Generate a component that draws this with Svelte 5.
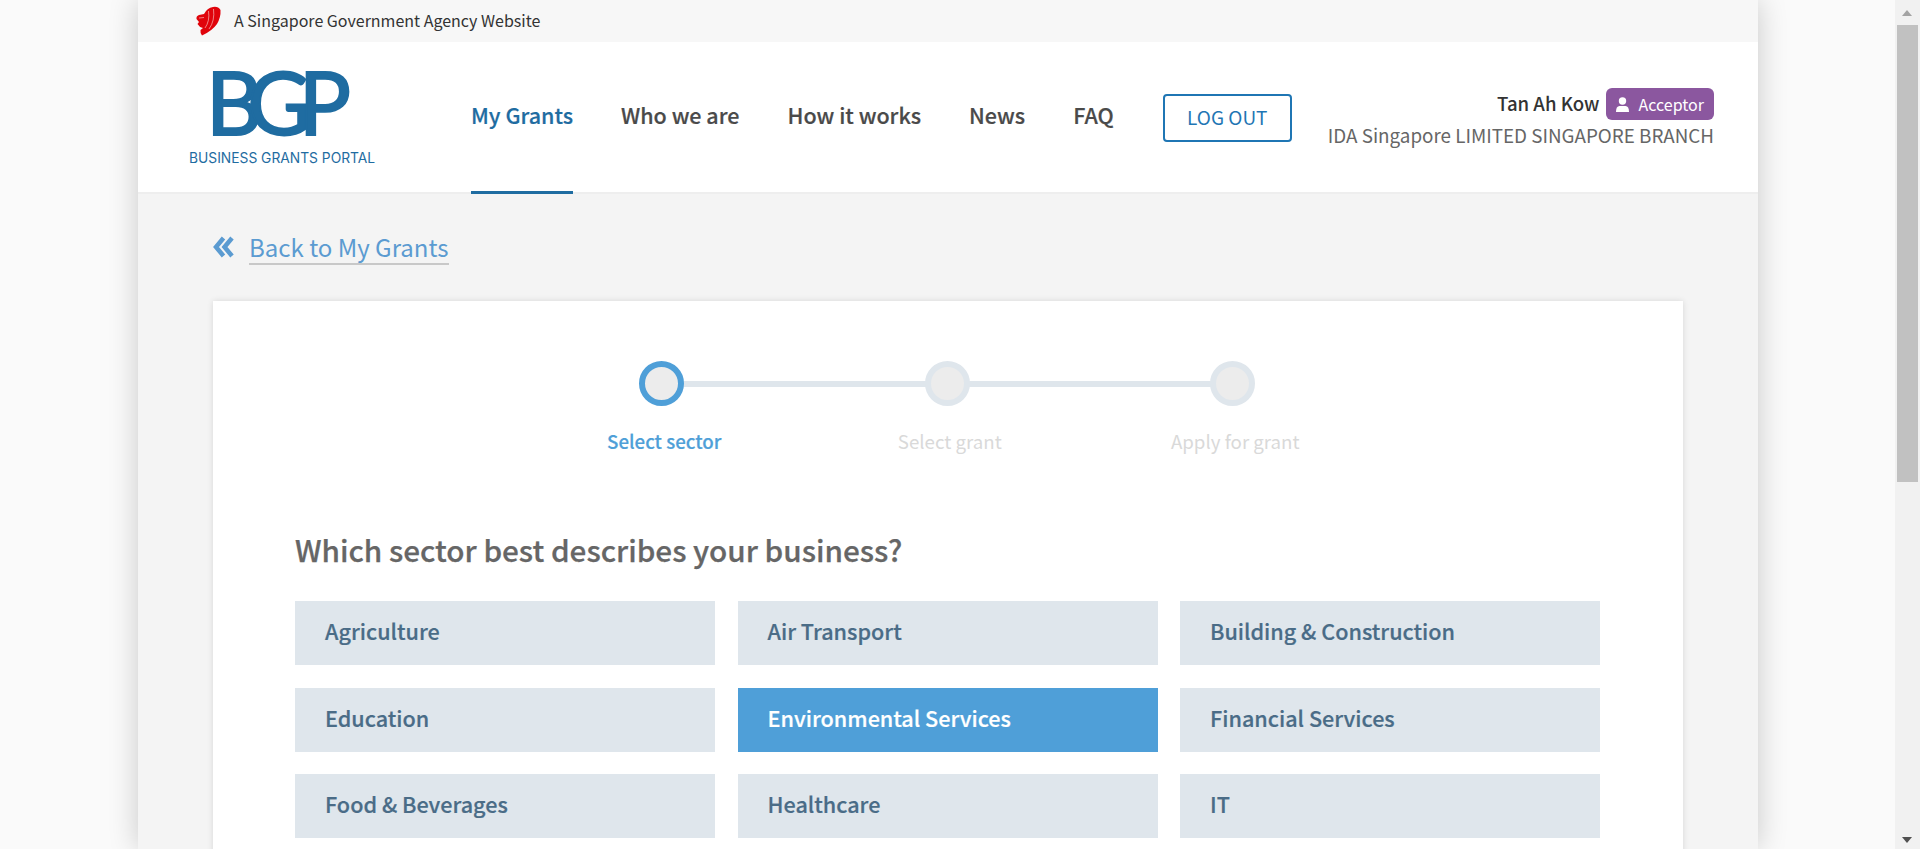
<script>
  const steps = [
    { label: 'Select sector', active: true },
    { label: 'Select grant', active: false },
    { label: 'Apply for grant', active: false }
  ];
  const sectors = [
    'Agriculture', 'Air Transport', 'Building & Construction',
    'Education', 'Environmental Services', 'Financial Services',
    'Food & Beverages', 'Healthcare', 'IT'
  ];
  const selected = 'Environmental Services';
  const nav = ['My Grants', 'Who we are', 'How it works', 'News', 'FAQ'];
</script>

<div class="page">
  <div class="shell">
    <div class="gov">
      <svg class="lion" width="25" height="30" viewBox="0 0 25 30" aria-hidden="true">
        <path fill="#e0040b" d="M3 9 L8 8 Q11 2 17 1 Q22 0 24.500 4 Q25 11 21 18 Q16 25 6 29.500 Q4 27 4.500 24 L7 22 Q3 21 1.500 18 L3 16 L0.500 13 Q0 10 3 9 Z"/>
        <path fill="none" stroke="#f7b8b8" stroke-width="0.700" d="M9 22 Q14 15 12.500 5 M13 23 Q19 15 17.500 3 M3 12 L8 11.500"/>
      </svg>
      <span class="govtext">A Singapore Government Agency Website</span>
    </div>
    <header class="head">
      <div class="logo">
        <div class="mark"><span>B</span><span>G</span><span>P</span></div>
        <div class="sub">BUSINESS GRANTS PORTAL</div>
      </div>
      <nav class="nav">
        {#each nav as item, i}
          <span class="link" class:on={i === 0}>{item}</span>
        {/each}
      </nav>
      <button class="logout">LOG OUT</button>
      <div class="user">
        <div class="line">
          <span class="name">Tan Ah Kow</span>
          <span class="role">
            <svg width="13" height="15" viewBox="0 0 13 15" aria-hidden="true"><circle cx="6.500" cy="4" r="3.700" fill="#fff"/><path fill="#fff" d="M0 15 Q0 9 3.500 9 H9.500 Q13 9 13 15 Z"/></svg>
            <span>Acceptor</span>
          </span>
        </div>
        <div class="org">IDA Singapore LIMITED SINGAPORE BRANCH</div>
      </div>
    </header>
    <main class="content">
      <div class="back">
        <svg width="21" height="22" viewBox="0 0 21 22" aria-hidden="true"><path fill="none" stroke="#5b9bd1" stroke-width="4.500" d="M10.500 2 L3 11 L10.500 20 M19 2 L11.500 11 L19 20"/></svg>
        <span class="backlink">Back to My Grants</span>
      </div>
      <section class="card">
        <div class="stepper">
          {#each steps as s}
            <div class="step" class:active={s.active}>
              <div class="dot"></div>
              <div class="label">{s.label}</div>
            </div>
          {/each}
        </div>
        <h1>Which sector best describes your business?</h1>
        <div class="grid">
          {#each sectors as s}
            <div class="tile" class:sel={s === selected}>{s}</div>
          {/each}
        </div>
      </section>
    </main>
  </div>
  <div class="scroll">
    <div class="up"></div>
    <div class="thumb"></div>
    <div class="down"></div>
  </div>
</div>

<style>
  :global(html), :global(body) { margin: 0; height: 849px; overflow: hidden; background: #fafafa; }
  .page {
    height: 849px; overflow: hidden; position: relative; background: #fafafa;
    font-family: "Noto Sans CJK SC", "Source Sans Pro", sans-serif;
  }
  .shell {
    width: 1620px; margin-left: 138px; height: 849px; background: #f4f4f4;
    box-shadow: 0 0 28px rgba(0,0,0,.2); overflow: hidden;
  }
  .gov {
    height: 42px; background: #f7f7f7; display: flex; align-items: center;
    padding-left: 58px; gap: 13px; font-size: 16px; color: #333; line-height: 40px;
  }
  .govtext { padding-bottom: 2px; }
  .lion { flex: none; }
  .head {
    height: 150px; background: #fff; border-bottom: 2px solid #eee;
    display: flex; position: relative;
  }
  .logo { width: 333px; padding-left: 51px; box-sizing: border-box; color: #1f6ca1; }
  .mark {
    font-family: "Lato", sans-serif; font-weight: 400; font-size: 87px; line-height: 66px;
    -webkit-text-stroke: 2px #1f6ca1;
    height: 66px; margin-top: 27px; margin-left: 17px; display: flex;
  }
  .mark span:nth-child(2) { margin-left: -15px; }
  .mark span:nth-child(3) { margin-left: -12px; }
  .sub {
    font-family: "Inter", sans-serif; font-weight: 400; font-size: 13.8px; line-height: 16px; margin-top: 15px; white-space: nowrap;
  }
  .nav { display: flex; gap: 48px; height: 152px; }
  .link {
    font-size: 21.5px; font-weight: 500; color: #4a4a4a; line-height: 29px; padding-top: 58px;
    -webkit-text-stroke: 0.2px currentColor;
    box-sizing: border-box; height: 152px; border-bottom: 3px solid transparent; white-space: nowrap;
  }
  .link.on { color: #1f6ca1; border-bottom-color: #1f6ca1; }
  .logout {
    margin: 52px 0 0 49px; width: 129px; height: 48px; box-sizing: border-box;
    border: 2px solid #1f76b4; border-radius: 4px; background: #fff; color: #1f76b4;
    font: 400 19px/1 "Noto Sans CJK SC", sans-serif; padding: 0 0 4px;
  }
  .user { position: absolute; right: 44px; top: 46px; text-align: right; }
  .line { display: flex; justify-content: flex-end; align-items: center; gap: 6px; height: 32px; }
  .name { font-size: 18.6px; font-weight: 500; color: #333; line-height: 28px; padding-bottom: 2px; }
  .role {
    background: #8b579f; color: #fff; border-radius: 6px; height: 32px; display: inline-flex; align-items: center;
    gap: 10px; padding: 0 10px 0 10px; font-size: 16px;
  }
  .org { font-size: 18.82px; color: #666; line-height: 28px; margin-top: 1px; white-space: nowrap; }
  .content { padding: 33px 75px 0; }
  .back { display: flex; align-items: center; gap: 15px; height: 40px; }
  .backlink { font-size: 24px; line-height: 33px; color: #5b9bd1; border-bottom: 2px solid #c8c8c8; }
  .card {
    margin-top: 34px; background: #fff; width: 1470px; height: 700px; box-shadow: 0 0 6px rgba(0,0,0,.12);
    padding: 60px 82px 0; box-sizing: border-box;
  }
  .stepper { display: flex; margin-left: 224px; width: 856.5px; position: relative; }
  .stepper::before {
    content: ""; position: absolute; left: 142px; width: 571px; top: 20px; height: 6px; background: #dfe6ec;
  }
  .step { width: 285.5px; display: flex; flex-direction: column; align-items: center; position: relative; }
  .dot {
    width: 45px; height: 45px; border-radius: 50%; box-sizing: border-box; border: 6px solid #dfe6ec; background: #ececec;
  }
  .active .dot { border-color: #4f9fd8; }
  .label { margin-top: 21px; font-size: 18.7px; line-height: 28px; color: #d9d9d9; white-space: nowrap; padding-left: 5px; }
  .active .label { color: #4f9fd8; font-weight: 500; -webkit-text-stroke: 0.2px currentColor; }
  h1 { margin: 74px 0 0; font-size: 29.7px; font-weight: 500; line-height: 42px; color: #666; -webkit-text-stroke: 0.25px currentColor; }
  .grid { display: grid; grid-template-columns: repeat(3, 420px); gap: 22.5px; margin-top: 30px; }
  .tile {
    height: 64px; background: #dfe6ec; color: #4a6c87; font-size: 21.6px; font-weight: 500;
    line-height: 60px; padding-left: 30px; -webkit-text-stroke: 0.2px currentColor;
  }
  .tile.sel { background: #4f9fd8; color: #fff; }
  .scroll {
    position: absolute; right: 0; top: 0; width: 25px; height: 849px; background: #f1f1f1;
  }
  .up { position: absolute; top: 10px; left: 7px; width: 0; height: 0; border: 5.500px solid transparent; border-top: 0; border-bottom: 6px solid #a3a3a3; }
  .thumb { position: absolute; top: 25px; left: 2px; width: 21px; height: 457px; background: #c1c1c1; }
  .down { position: absolute; bottom: 6px; left: 7px; width: 0; height: 0; border: 5.500px solid transparent; border-bottom: 0; border-top: 6px solid #505050; }
</style>
